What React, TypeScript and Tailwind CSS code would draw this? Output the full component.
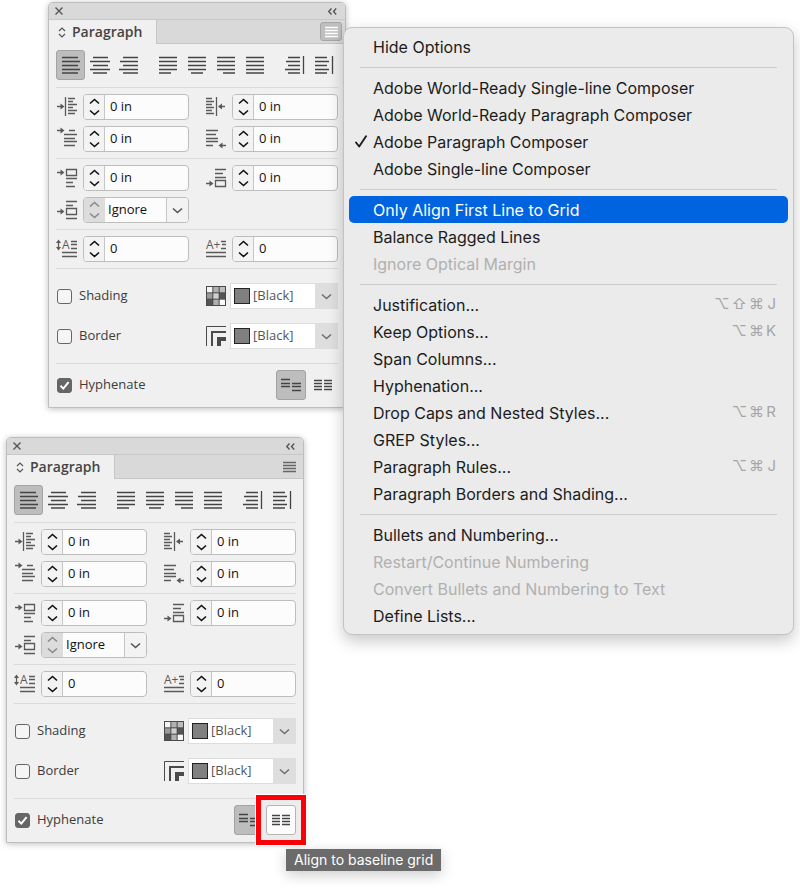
import React, { useId } from 'react';
import { clsx } from 'clsx';

interface LineIconProps {
  d: string;
  width?: number;
  height?: number;
  children?: React.ReactNode;
}

const LineIcon: React.FC<LineIconProps> = ({ d, width = 20, height = 20, children }) => (
  <svg
    width={width}
    height={height}
    viewBox={`0 0 ${width} ${height}`}
    fill="none"
    stroke="currentColor"
    strokeWidth="1.3"
    aria-hidden="true"
    className="shrink-0 overflow-visible"
  >
    <path d={d} />
    {children}
  </svg>
);

// Alignment buttons, grouped the way they sit in the panel
const ALIGN_GROUPS = [
  [
    { label: 'Align left', d: 'M1 1.5H17M1 5.5H19M1 9.5H17M1 13.5H19M1 17H17' },
    { label: 'Align center', d: 'M3 1.5H18M0 5.5H20M3 9.5H18M0 13.5H20M3 17H17' },
    { label: 'Align right', d: 'M4 1.5H19M1 5.5H19M4 9.5H19M0 13.5H19M4 17H19' },
  ],
  [
    { label: 'Justify with last line left', d: 'M1 1.5H19M1 5.5H19M1 9.5H19M1 13.5H19M1 17H13' },
    { label: 'Justify with last line centered', d: 'M1 1.5H19M1 5.5H19M1 9.5H19M1 13.5H19M4 17H16' },
    { label: 'Justify with last line right', d: 'M1 1.5H19M1 5.5H19M1 9.5H19M1 13.5H19M7 17H19' },
    { label: 'Justify all lines', d: 'M1 1.5H19M1 5.5H19M1 9.5H19M1 13.5H19M1 17H19' },
  ],
  [
    { label: 'Align towards spine', d: 'M3 1.5H15M1 5.5H15M3 9.5H15M0 13.5H15M3 17H15M18.5 0V18' },
    { label: 'Align away from spine', d: 'M1 1.5H13M1 5.5H15M1 9.5H13M1 13.5H15M1 17H13M18.5 0V18' },
  ],
];

const ICONS = {
  leftIndent: 'M8.5 0V19M11 1.5H18M11 4.5H16M11 7.5H20M11 10.5H16M11 13.5H20M11 16.5H18M0 9.5H6',
  rightIndent: 'M10.5 0V19M0 1.5H6M0 4.5H8M0 7.5H6M0 10.5H8M0 13.5H6M0 16.5H8M13 9.5H19',
  firstLine: 'M0 1.5H6M12 1.5H18M7 5.5H20M7 9.5H18M7 12.5H20M7 16.5H18',
  lastLine: 'M0 1.5H12M0 5.5H10M0 9.5H12M0 12.5H12M0 16.5H7M14 16.5H20',
  spaceBefore: 'M0 4.5H6M9.5 1.5H19.5V7.5H9.5ZM9 10.5H20M9 14.5H16M9 18.5H18',
  spaceAfter: 'M9 1.5H20M9 5.5H17M9 9.5H20M9.5 12.5H19.5V18.5H9.5ZM0 15.5H6',
  spaceBetween: 'M9 1.5H20M9 5.5H16M9.5 8.5H19.5V14.5H9.5ZM9 18.5H20M0 11.5H6',
  dropCapLines: 'M1.5 2V10M14 2.5H20M14 5.5H20M14 9.5H20M5 13.5H20M5 17.5H20',
  dropCapChars: 'M15 2.5H20M16 5.5H20M15 9.5H20M0 13.5H20M0 17.5H20',
};

const Chevron: React.FC<{ up?: boolean }> = ({ up }) => (
  <svg width="11" height="7" viewBox="0 0 11 7" fill="none" stroke="currentColor" strokeWidth="1.6" aria-hidden="true">
    <path d={up ? 'M1 5.5L5.5 1.5L10 5.5' : 'M1 1.5L5.5 5.5L10 1.5'} />
  </svg>
);

const Spinner: React.FC<{ label: string; disabled?: boolean }> = ({ label, disabled }) => (
  <div
    className={clsx(
      'flex w-[21px] shrink-0 flex-col items-center justify-around py-px',
      disabled ? 'bg-[#dcdcdc] text-[#8a8a8a]' : 'border-r border-[#c6c6c6] bg-[#f3f3f3] text-[#111]'
    )}
  >
    <button type="button" aria-label={`Increase ${label}`} disabled={disabled}>
      <Chevron up />
    </button>
    <button type="button" aria-label={`Decrease ${label}`} disabled={disabled}>
      <Chevron />
    </button>
  </div>
);

interface NumberFieldProps {
  label: string;
  value: string;
  icon: React.ReactNode;
}

const NumberField: React.FC<NumberFieldProps> = ({ label, value, icon }) => (
  <div className="flex items-center">
    <span className="w-[27px] shrink-0 pl-px text-[#5a5a5a]">{icon}</span>
    <div className="flex h-[26px] min-w-0 flex-1 overflow-hidden rounded border border-[#bdbdbd] bg-[#fcfcfc]">
      <Spinner label={label} />
      <input
        type="text"
        aria-label={label}
        defaultValue={value}
        className="w-full min-w-0 bg-transparent pl-[5px] text-[13px] font-medium text-[#111] outline-none"
      />
    </div>
  </div>
);

const ColorSelect: React.FC<{ label: string; icon: React.ReactNode }> = ({ label, icon }) => (
  <div className="flex items-center">
    <span className="w-[25px] shrink-0 pl-px">{icon}</span>
    <div className="relative flex-1">
      <span className="pointer-events-none absolute top-[5px] left-1 size-4 border border-[#222] bg-[#808080]" />
      <select
        aria-label={label}
        className="block h-[26px] w-full appearance-none border border-[#dcdcdc] bg-white pl-[22px] text-[13px] font-medium text-[#555] outline-none"
      >
        <option>[Black]</option>
      </select>
      <span className="pointer-events-none absolute inset-y-0 right-0 flex w-[23px] items-center justify-center rounded-r bg-[#dedede] text-[#707070]">
        <Chevron />
      </span>
    </div>
  </div>
);

const CheckField: React.FC<{ label: string; checked?: boolean }> = ({ label, checked }) => {
  const id = useId();

  return (
    <div className="flex items-center gap-[7px] pl-px">
      <span className="relative size-[15px]">
        <input
          id={id}
          type="checkbox"
          defaultChecked={checked}
          className="peer block size-[15px] appearance-none rounded-[3px] border border-[#666] bg-[#f5f5f5] checked:bg-[#666]"
        />
        <svg
          viewBox="0 0 15 15"
          fill="none"
          stroke="white"
          strokeWidth="2"
          aria-hidden="true"
          className="pointer-events-none absolute inset-0 hidden peer-checked:block"
        >
          <path d="M3.5 7.8L6.3 10.6L11.6 4.2" />
        </svg>
      </span>
      <label htmlFor={id} className="text-[13px] font-medium text-[#3c3c3c]">
        {label}
      </label>
    </div>
  );
};

const SwatchGridIcon = () => {
  const fills = ['#f5f5f5', '#b0b0b0', '#bcbcbc', '#9a9a9a', '#cfcfcf', '#555', '#555', '#b0b0b0', '#fafafa'];
  return (
    <svg width="20" height="20" viewBox="0 0 20 20" aria-hidden="true">
      <rect width="20" height="20" fill="#4a4a4a" />
      {fills.map((fill, idx) => (
        <rect key={idx} x={1 + (idx % 3) * 6.33} y={1 + Math.floor(idx / 3) * 6.33} width="5.33" height="5.33" fill={fill} />
      ))}
    </svg>
  );
};

const CornerIcon = () => (
  <svg width="20" height="20" viewBox="0 0 20 20" fill="none" stroke="#4a4a4a" aria-hidden="true">
    <path d="M0.5 20V0.5H20" strokeWidth="1" />
    <path d="M6 20V6H20" strokeWidth="2" />
    <path d="M13 20V13H20" strokeWidth="4" />
  </svg>
);

const ArrowHead: React.FC<{ points: string }> = ({ points }) => (
  <polygon points={points} fill="currentColor" stroke="none" />
);

interface ParagraphPanelProps {
  menuOpen?: boolean;
  showHint?: boolean;
}

const ParagraphPanel: React.FC<ParagraphPanelProps> = ({ menuOpen, showHint }) => (
  <section className="w-[298px] rounded-t-[5px] border border-[#bdbdbd] bg-[#f0f0f0] font-['Open_Sans','Noto_Sans',sans-serif] shadow-[0_1px_6px_rgba(0,0,0,0.25)]">
    <header className="flex h-[17px] items-center justify-between rounded-t border-b border-[#c8c8c8] bg-[#d9d9d9] px-1.5 text-[#555]">
      <button type="button" aria-label="Close panel">
        <svg width="8" height="8" viewBox="0 0 8 8" stroke="currentColor" strokeWidth="1.4">
          <path d="M0.5 0.5L7.5 7.5M7.5 0.5L0.5 7.5" />
        </svg>
      </button>
      <button type="button" aria-label="Collapse panel" className="pr-0.5">
        <svg width="9" height="7" viewBox="0 0 9 7" fill="none" stroke="currentColor" strokeWidth="1.4">
          <path d="M3.5 0.5L0.8 3.5L3.5 6.5M8.2 0.5L5.5 3.5L8.2 6.5" />
        </svg>
      </button>
    </header>

    <div className="flex h-6 items-stretch bg-[#f0f0f0]">
      <div className="flex items-center gap-1.5 pr-3.5 pl-[9px]">
        <svg width="8" height="11" viewBox="0 0 8 11" fill="none" stroke="#555" strokeWidth="1.2" aria-hidden="true">
          <path d="M1 4L4 1L7 4M1 7L4 10L7 7" />
        </svg>
        <h2 className="text-[14px] leading-5 font-semibold text-[#444]">Paragraph</h2>
      </div>
      <div className="flex flex-1 items-center justify-end border-b border-l border-[#c6c6c6] bg-[#d9d9d9] pr-[3px]">
        <button
          type="button"
          aria-label="Panel menu"
          className={clsx(
            'flex h-[19px] w-[22px] items-center justify-center rounded-[3px] border',
            menuOpen ? 'border-[#a6a6a6] bg-[#bfbfbf] text-white' : 'border-transparent text-[#666]'
          )}
        >
          <LineIcon width={13} height={10} d="M0 0.5H13M0 3.5H13M0 6.5H13M0 9.5H13" />
        </button>
      </div>
    </div>

    <div className="px-[7px]">
      <div className="flex justify-between pt-1.5 pb-[7px] text-[#444]">
        {ALIGN_GROUPS.map((group, groupIdx) => (
          <div key={groupIdx} className="flex">
            {group.map((item, idx) => (
              <button
                key={item.label}
                type="button"
                aria-label={item.label}
                className={clsx(
                  'flex h-[30px] w-[29px] items-center justify-center rounded-[3px] border',
                  groupIdx === 0 && idx === 0 ? 'border-[#a3a3a3] bg-[#bdbdbd]' : 'border-transparent'
                )}
              >
                <LineIcon height={18} d={item.d} />
              </button>
            ))}
          </div>
        ))}
      </div>

      <div className="grid grid-cols-2 gap-x-4 gap-y-1.5 border-t border-[#dadada] py-1.5">
        <NumberField
          label="Left indent"
          value="0 in"
          icon={<LineIcon d={ICONS.leftIndent}><ArrowHead points="3.5,6.5 7.5,9.5 3.5,12.5" /></LineIcon>}
        />
        <NumberField
          label="Right indent"
          value="0 in"
          icon={<LineIcon d={ICONS.rightIndent}><ArrowHead points="16,6.5 12,9.5 16,12.5" /></LineIcon>}
        />
        <NumberField
          label="First line left indent"
          value="0 in"
          icon={<LineIcon d={ICONS.firstLine}><ArrowHead points="3.5,-1.5 7.5,1.5 3.5,4.5" /></LineIcon>}
        />
        <NumberField
          label="Last line right indent"
          value="0 in"
          icon={<LineIcon d={ICONS.lastLine}><ArrowHead points="16.5,13.5 12.5,16.5 16.5,19.5" /></LineIcon>}
        />
      </div>

      <div className="grid grid-cols-2 gap-x-4 gap-y-1.5 border-t border-[#dadada] py-1.5">
        <NumberField
          label="Space before"
          value="0 in"
          icon={<LineIcon d={ICONS.spaceBefore}><ArrowHead points="3.5,1.5 7.5,4.5 3.5,7.5" /></LineIcon>}
        />
        <NumberField
          label="Space after"
          value="0 in"
          icon={<LineIcon d={ICONS.spaceAfter}><ArrowHead points="3.5,12.5 7.5,15.5 3.5,18.5" /></LineIcon>}
        />
        <div className="flex items-center">
          <span className="w-[27px] shrink-0 pl-px text-[#5a5a5a]">
            <LineIcon d={ICONS.spaceBetween}><ArrowHead points="3.5,8.5 7.5,11.5 3.5,14.5" /></LineIcon>
          </span>
          <div className="relative flex h-[26px] min-w-0 flex-1 overflow-hidden rounded border border-[#bdbdbd] bg-[#fcfcfc]">
            <Spinner label="space between paragraphs" disabled />
            <select
              aria-label="Space between paragraphs using same style"
              className="w-full min-w-0 appearance-none bg-transparent pl-[3px] text-[13px] font-medium text-[#111] outline-none"
            >
              <option>Ignore</option>
            </select>
            <span className="pointer-events-none absolute inset-y-0 right-0 flex w-[22px] items-center justify-center border-l border-[#c6c6c6] bg-[#f3f3f3] text-[#555]">
              <Chevron />
            </span>
          </div>
        </div>
      </div>

      <div className="grid grid-cols-2 gap-x-4 border-t border-[#dadada] py-1.5">
        <NumberField
          label="Drop cap number of lines"
          value="0"
          icon={
            <LineIcon d={ICONS.dropCapLines}>
              <ArrowHead points="-1,4 1.5,0.5 4,4" />
              <ArrowHead points="-1,8 1.5,11.5 4,8" />
              <text x="5" y="10" fontSize="12" fill="currentColor" stroke="none">A</text>
            </LineIcon>
          }
        />
        <NumberField
          label="Drop cap one or more characters"
          value="0"
          icon={
            <LineIcon d={ICONS.dropCapChars}>
              <text x="0" y="10" fontSize="12" fill="currentColor" stroke="none">A+</text>
            </LineIcon>
          }
        />
      </div>

      <div className="grid grid-cols-2 gap-x-4 gap-y-3.5 border-t border-[#dadada] py-3.5">
        <CheckField label="Shading" />
        <ColorSelect label="Shading color" icon={<SwatchGridIcon />} />
        <CheckField label="Border" />
        <ColorSelect label="Border color" icon={<CornerIcon />} />
      </div>

      <div className="flex items-center justify-between border-t border-[#dadada] pt-1.5 pb-[7px]">
        <CheckField label="Hyphenate" checked />
        <div className="flex gap-0.5 text-[#444]">
          <button
            type="button"
            aria-label="Do not align to baseline grid"
            className="flex size-[30px] items-center justify-center rounded-[3px] border border-[#a3a3a3] bg-[#bdbdbd]"
          >
            <LineIcon height={14} d="M0 1.5H9M0 5.5H9M0 8.5H9M11 5.5H20M11 8.5H20M11 12.5H20" />
          </button>
          <div className="relative">
            {showHint && (
              <span className="absolute -inset-2.5 border-[5px] border-[#fb0007] bg-[#ececec] outline outline-white" />
            )}
            <button
              type="button"
              aria-label="Align to baseline grid"
              className={clsx(
                'relative flex size-[30px] items-center justify-center rounded-[3px] border',
                showHint ? 'border-[#b5b5b5] bg-[#fcfcfc]' : 'border-transparent'
              )}
            >
              <LineIcon width={18} height={10} d="M0 0.5H8M0 3.5H8M0 6.5H8M0 9.5H8M10 0.5H18M10 3.5H18M10 6.5H18M10 9.5H18" />
            </button>
            {showHint && (
              <span
                role="tooltip"
                className="absolute top-11 left-5 bg-[#6b6b6b] px-2 font-[Inter,sans-serif] text-[14px] leading-[22px] whitespace-nowrap text-white shadow-[0_4px_14px_rgba(0,0,0,0.2)]"
              >
                Align to baseline grid
              </span>
            )}
          </div>
        </div>
      </div>
    </div>
  </section>
);

interface MenuEntry {
  label: string;
  keys?: string[];
  checked?: boolean;
  active?: boolean;
  disabled?: boolean;
}

const MENU_SECTIONS: MenuEntry[][] = [
  [{ label: 'Hide Options' }],
  [
    { label: 'Adobe World-Ready Single-line Composer' },
    { label: 'Adobe World-Ready Paragraph Composer' },
    { label: 'Adobe Paragraph Composer', checked: true },
    { label: 'Adobe Single-line Composer' },
  ],
  [
    { label: 'Only Align First Line to Grid', active: true },
    { label: 'Balance Ragged Lines' },
    { label: 'Ignore Optical Margin', disabled: true },
  ],
  [
    { label: 'Justification...', keys: ['⌥', '⇧', '⌘', 'J'] },
    { label: 'Keep Options...', keys: ['⌥', '⌘', 'K'] },
    { label: 'Span Columns...' },
    { label: 'Hyphenation...' },
    { label: 'Drop Caps and Nested Styles...', keys: ['⌥', '⌘', 'R'] },
    { label: 'GREP Styles...' },
    { label: 'Paragraph Rules...', keys: ['⌥', '⌘', 'J'] },
    { label: 'Paragraph Borders and Shading...' },
  ],
  [
    { label: 'Bullets and Numbering...' },
    { label: 'Restart/Continue Numbering', disabled: true },
    { label: 'Convert Bullets and Numbering to Text', disabled: true },
    { label: 'Define Lists...' },
  ],
];

const PanelMenu = () => (
  <div
    role="menu"
    className="min-w-0 flex-1 rounded-[9px] border border-[#c2c2c2] bg-[#ebebeb] p-[5px] font-[Inter,sans-serif] text-base text-[#1c1c1c] shadow-[0_6px_16px_rgba(0,0,0,0.22)]"
  >
    {MENU_SECTIONS.map((section, sectionIdx) => (
      <React.Fragment key={sectionIdx}>
        {sectionIdx > 0 && (
          <div role="separator" className="flex h-3.5 items-center px-[11px]">
            <div className="h-px flex-1 bg-[#cdcdcd]" />
          </div>
        )}
        {section.map((item) => (
          <button
            key={item.label}
            type="button"
            role="menuitem"
            disabled={item.disabled}
            className={clsx(
              'flex h-[27px] w-full items-center rounded-[5px] pr-3 text-left whitespace-nowrap',
              item.active && 'bg-[#0064e1] text-white',
              item.disabled && 'text-[#b0b0b0]'
            )}
          >
            <span className="flex w-6 shrink-0 justify-center">
              {item.checked && (
                <svg width="12" height="13" viewBox="0 0 12 13" fill="none" stroke="currentColor" strokeWidth="1.9" aria-hidden="true">
                  <path d="M1 7.5L4.2 11.5L11 1.2" strokeLinecap="round" strokeLinejoin="round" />
                </svg>
              )}
            </span>
            <span className="flex-1">{item.label}</span>
            {item.keys && (
              <span className="flex gap-0.5 font-[Inter,'DejaVu_Sans',sans-serif] text-base text-[#a6a6a6]">
                {item.keys.map((key, idx) => (
                  <kbd key={idx} className="min-w-2.5 text-right font-[inherit] text-[15px]">{key}</kbd>
                ))}
              </span>
            )}
          </button>
        ))}
      </React.Fragment>
    ))}
  </div>
);

export default function App() {
  return (
    <main className="flex min-h-screen items-start bg-white">
      <div className="flex shrink-0 flex-col gap-[29px] pt-0.5">
        <div className="pl-12">
          <ParagraphPanel menuOpen />
        </div>
        <div className="pl-1.5">
          <ParagraphPanel showHint />
        </div>
      </div>
      <div className="relative -ml-[3px] flex flex-1 pt-[27px] pr-1.5">
        <PanelMenu />
      </div>
    </main>
  );
}
